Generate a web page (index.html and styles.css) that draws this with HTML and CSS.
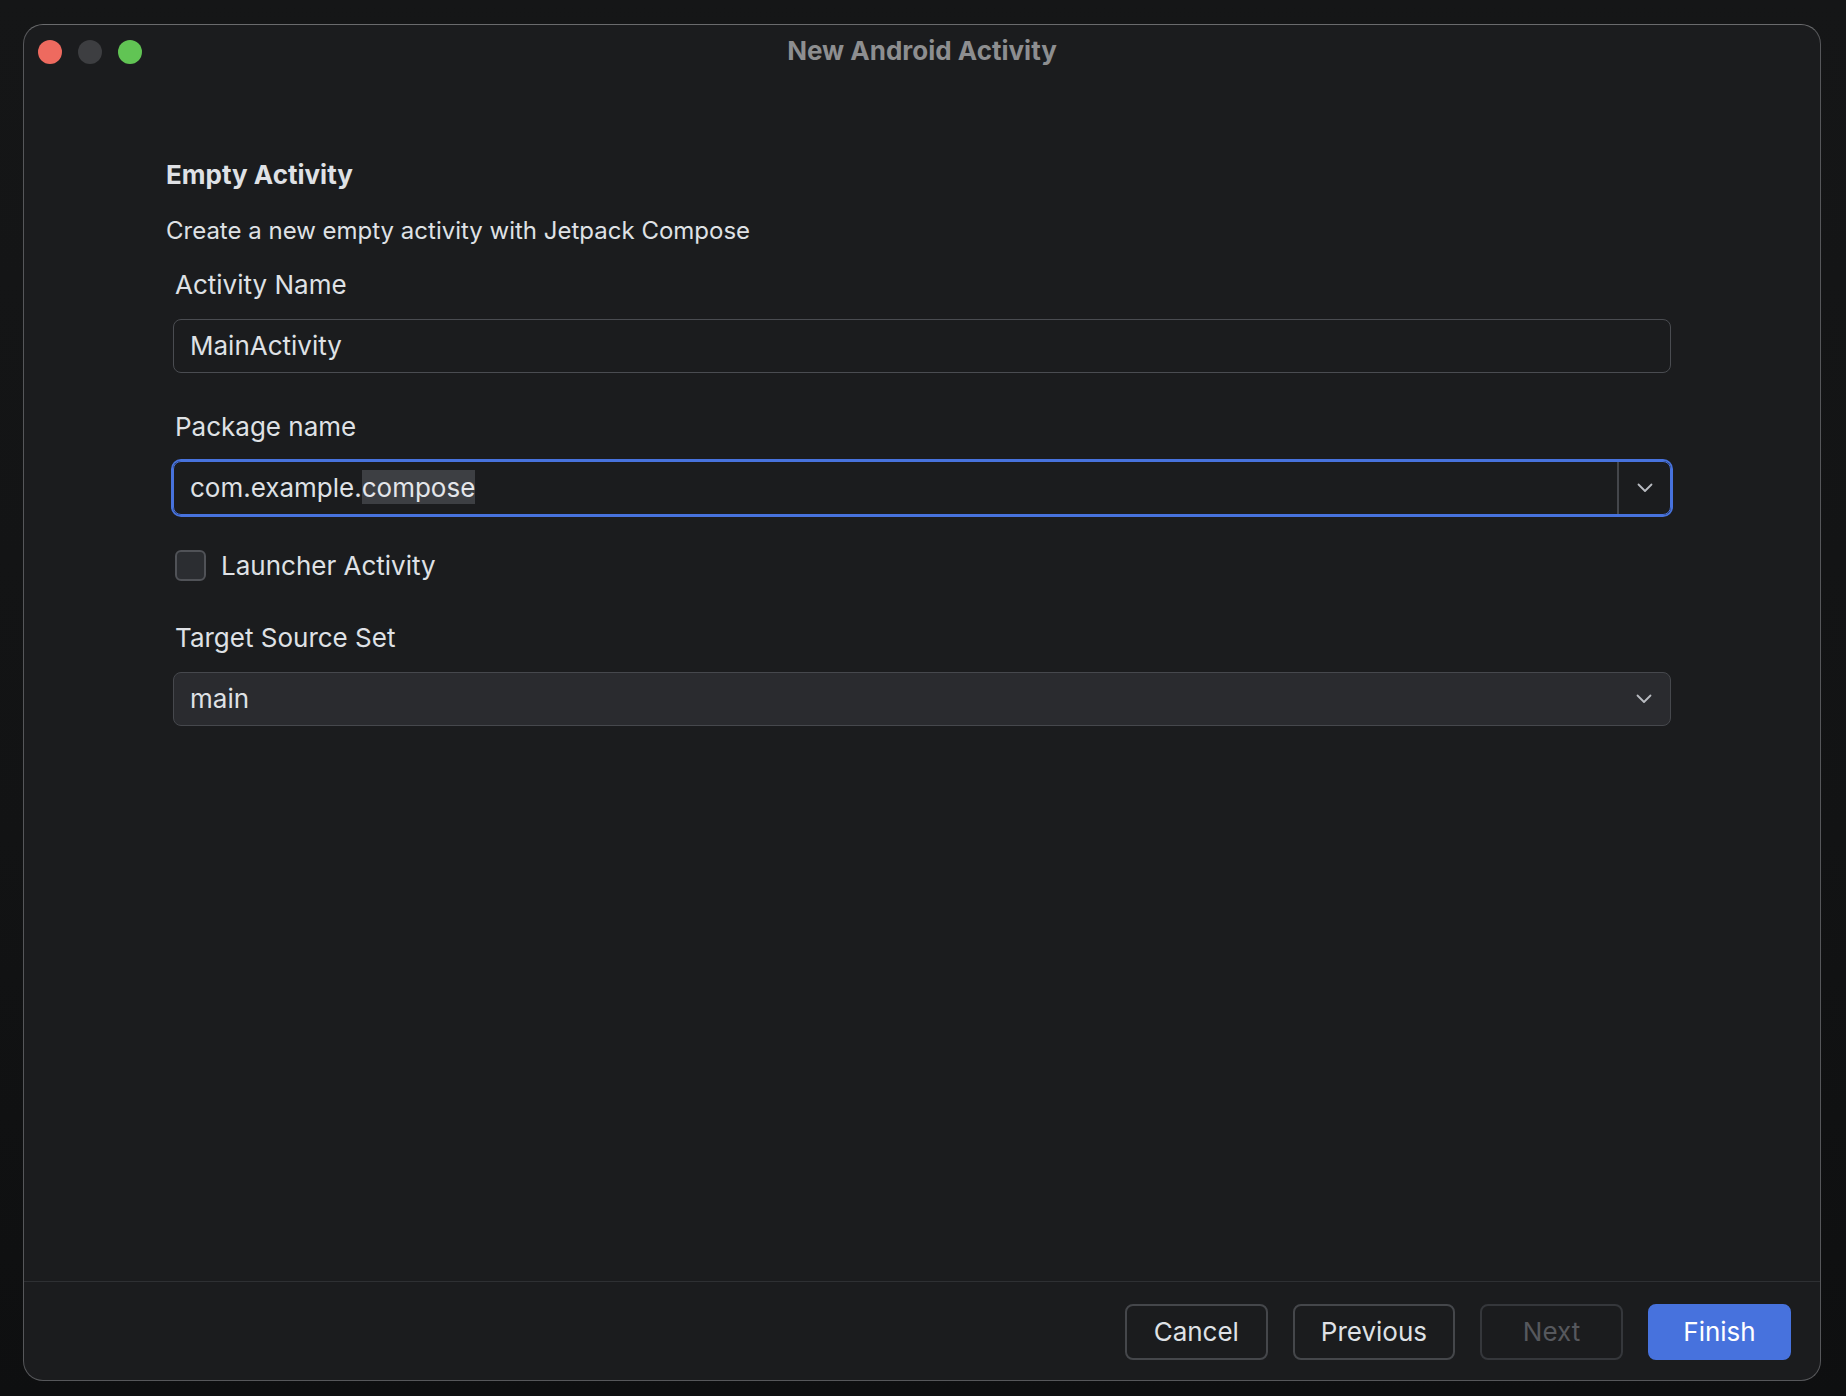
FILE: index.html
```html
<!DOCTYPE html>
<html lang="en">
<head>
<meta charset="utf-8">
<title>New Android Activity</title>
<link rel="stylesheet" href="styles.css">
</head>
<body>
<div class="window">
  <div class="titlebar">
    <div class="lights">
      <span class="light red"></span>
      <span class="light gray"></span>
      <span class="light green"></span>
    </div>
    <div class="title">New Android Activity</div>
    <div class="spacer"></div>
  </div>

  <div class="content">
    <h1 class="heading">Empty Activity</h1>
    <p class="desc">Create a new empty activity with Jetpack Compose</p>

    <div class="form">
      <div class="label label-first">Activity Name</div>
      <div class="field">
        <span class="value">MainActivity</span>
      </div>

      <div class="label label-pkg">Package name</div>
      <div class="field combo focused">
        <span class="value">com.example.<span class="sel">compose</span></span>
        <span class="arrow-btn">
          <svg class="chevron" viewBox="0 0 16 10" width="16" height="10"><path d="M1.5 1.5 L8 8 L14.5 1.5" fill="none" stroke="#b9bcc2" stroke-width="1.8" stroke-linecap="round" stroke-linejoin="round"/></svg>
        </span>
      </div>

      <div class="check-row">
        <span class="checkbox"></span>
        <span class="check-label">Launcher Activity</span>
      </div>

      <div class="label label-target">Target Source Set</div>
      <div class="field select">
        <span class="value">main</span>
        <span class="select-arrow">
          <svg class="chevron" viewBox="0 0 16 10" width="16" height="10"><path d="M1.5 1.5 L8 8 L14.5 1.5" fill="none" stroke="#b9bcc2" stroke-width="1.8" stroke-linecap="round" stroke-linejoin="round"/></svg>
        </span>
      </div>
    </div>
  </div>

  <div class="footer">
    <button class="btn">Cancel</button>
    <button class="btn">Previous</button>
    <button class="btn disabled">Next</button>
    <button class="btn primary">Finish</button>
  </div>
</div>
</body>
</html>
```

FILE: styles.css
```css
* { box-sizing: border-box; }

html, body {
  margin: 0;
  padding: 0;
}

body {
  width: 1846px;
  height: 1396px;
  overflow: hidden;
  background: linear-gradient(180deg, #151617 0%, #121314 60%, #0e0f10 100%);
  font-family: "Inter", "Noto Sans", "Liberation Sans", sans-serif;
  color: #dfe1e5;
}

.window {
  margin: 24px 0 0 23px;
  width: 1798px;
  height: 1357px;
  background: #1b1c1e;
  border: 1px solid #56575a;
  border-top-color: #6a6b6d;
  border-radius: 20px;
  display: flex;
  flex-direction: column;
  overflow: hidden;
}

/* title bar */
.titlebar {
  height: 53px;
  display: grid;
  grid-template-columns: 1fr auto 1fr;
  align-items: center;
  flex: none;
}

.lights {
  display: flex;
  gap: 16px;
  padding-left: 14px;
}

.light {
  width: 24px;
  height: 24px;
  border-radius: 50%;
  display: block;
}
.light.red { background: #ee6a5f; }
.light.gray { background: #3d3e41; }
.light.green { background: #61c454; }

.title {
  font-size: 26px;
  font-weight: 700;
  color: #8d8e90;
  margin-bottom: 2px;
}

/* content */
.content {
  flex: 1;
  padding: 82px 149px 0 142px;
}

.heading {
  margin: 0;
  font-size: 26px;
  line-height: 30px;
  font-weight: 700;
  color: #dfe1e5;
}

.desc {
  margin: 26px 0 0 0;
  font-size: 24px;
  line-height: 30px;
  color: #dfe1e5;
}

.form {
  margin-left: 7px;
}

.label {
  font-size: 26px;
  line-height: 30px;
  margin-left: 2px;
  color: #dfe1e5;
}
.label-first { margin-top: 24px; }
.label-pkg { margin-top: 39px; }
.label-target { margin-top: 42px; }

.field {
  margin-top: 19px;
  height: 54px;
  border: 1px solid #4a4c51;
  border-radius: 8px;
  display: flex;
  align-items: center;
  font-size: 26px;
  line-height: 30px;
  color: #dfe1e5;
}

.field .value {
  flex: 1;
  padding-left: 16px;
  white-space: nowrap;
}

.field.focused {
  border-color: #4772dd;
  box-shadow: 0 0 0 2px #4772dd;
}

.sel {
  background: #3d3f43;
  padding: 2px 0 1px;
  color: #e4e6ea;
}

.arrow-btn {
  width: 53px;
  height: 100%;
  border-left: 2px solid #44464b;
  display: flex;
  align-items: center;
  justify-content: center;
}

.chevron { display: block; }

.field.select {
  background: #2a2b2f;
  border-color: #46484d;
}

.select-arrow {
  width: 53px;
  display: flex;
  align-items: center;
  justify-content: center;
}

.check-row {
  margin-top: 35px;
  display: flex;
  align-items: center;
  gap: 15px;
  margin-left: 2px;
}

.checkbox {
  width: 31px;
  height: 31px;
  border-radius: 6px;
  border: 2px solid #505257;
  background: #2b2d31;
  display: block;
}

.check-label {
  font-size: 26px;
  line-height: 30px;
  color: #dfe1e5;
}

/* footer */
.footer {
  flex: none;
  border-top: 1px solid #2e3033;
  padding: 22px 29px 20px 0;
  display: flex;
  justify-content: flex-end;
  gap: 25px;
}

.btn {
  height: 56px;
  min-width: 143px;
  padding: 0 26px;
  border: 2px solid #45474b;
  border-radius: 8px;
  background: transparent;
  color: #dfe1e5;
  font-family: "Inter", "Noto Sans", "Liberation Sans", sans-serif;
  font-size: 26px;
  line-height: 30px;
}

.btn.disabled {
  color: #56585d;
  border-color: #35373b;
}

.btn.primary {
  background: #4772dd;
  border-color: #4772dd;
  color: #ffffff;
}
```
